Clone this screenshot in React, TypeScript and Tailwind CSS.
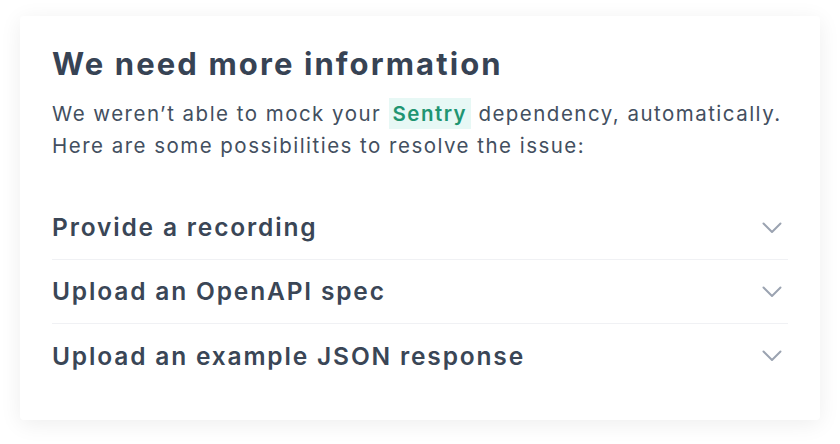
import { ReactNode } from "react"

const options = [
  "Provide a recording",
  "Upload an OpenAPI spec",
  "Upload an example JSON response",
]

function Chevron() {
  return (
    <svg width="20" height="12" viewBox="0 0 20 12" fill="none" className="mr-[6px] shrink-0">
      <polyline points="1.5,1.5 10,10 18.5,1.5" stroke="#9ba3b1" strokeWidth="2" strokeLinecap="round" strokeLinejoin="round" />
    </svg>
  )
}

function Row({ children, last }: { children: ReactNode; last?: boolean }) {
  return (
    <div className={`flex h-16 items-center justify-between ${last ? "" : "border-b border-[#f0f1f4]"}`}>
      <span className="text-[24.5px] font-semibold tracking-[0.075em] text-[#3a4656]">{children}</span>
      <Chevron />
    </div>
  )
}

export default function App() {
  return (
    <div className="min-h-screen bg-white pt-4 px-5 font-['Inter',sans-serif]">
      <div className="rounded bg-white px-8 pt-[30px] pb-8 shadow-[0_4px_22px_rgba(0,0,0,0.07)]">
        <h1 className="text-[31px] leading-9 font-bold tracking-[0.068em] text-[#374354]">
          We need more information
        </h1>
        <p className="mt-[16px] text-[20.5px] leading-8 tracking-[0.072em] text-[#434f5f]">
          We weren’t able to mock your{" "}
          <span className="bg-[#e7f8f5] px-1 py-[3px] font-semibold text-[#1f9572]">Sentry</span>{" "}
          dependency, automatically.
          <br />
          Here are some possibilities to resolve the issue:
        </p>
        <div className="mt-[34px]">
          {options.map((o, i) => (
            <Row key={o} last={i === options.length - 1}>
              {o}
            </Row>
          ))}
        </div>
      </div>
    </div>
  )
}
